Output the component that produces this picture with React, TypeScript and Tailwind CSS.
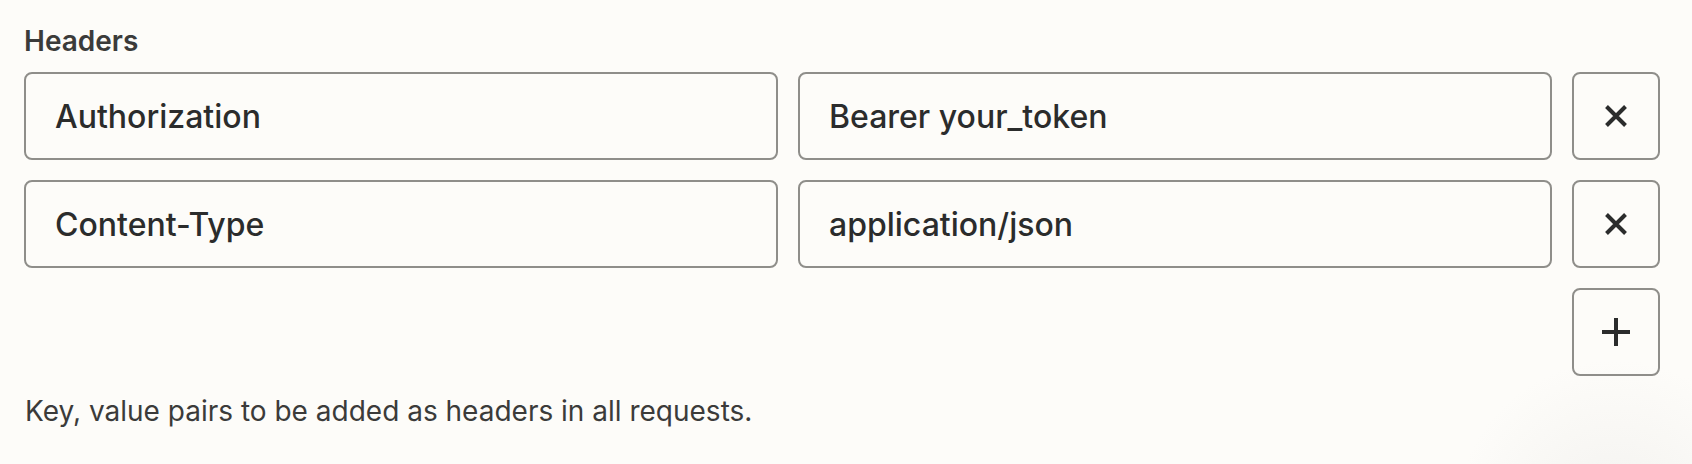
import { useState } from "react";

type Header = { key: string; value: string };

const XIcon = () => (
  <svg width="22" height="22" viewBox="0 0 22 22" fill="none" stroke="currentColor" strokeWidth="4">
    <path d="M1.5 1.5L20.5 20.5M20.5 1.5L1.5 20.5" />
  </svg>
);

const PlusIcon = () => (
  <svg width="28" height="28" viewBox="0 0 28 28" fill="none" stroke="currentColor" strokeWidth="4">
    <path d="M14 0V28M0 14H28" />
  </svg>
);

const HeaderRow = ({ header, onRemove }: { header: Header; onRemove: () => void }) => (
  <div className="flex gap-5">
    <input
      defaultValue={header.key}
      className="flex-1 min-w-0 h-[88px] px-[29px] rounded-lg border-2 border-[#8f8e8a] bg-transparent text-[32px] font-medium text-[#2b2c2c] outline-none"
    />
    <input
      defaultValue={header.value}
      className="flex-1 min-w-0 h-[88px] px-[29px] rounded-lg border-2 border-[#8f8e8a] bg-transparent text-[32px] font-medium text-[#2b2c2c] outline-none"
    />
    <button
      onClick={onRemove}
      className="flex justify-center items-center w-[88px] h-[88px] shrink-0 rounded-lg border-2 border-[#8f8e8a] text-[#2b2c2c]"
      title="Remove header"
    >
      <XIcon />
    </button>
  </div>
);

export default function App() {
  const [headers, setHeaders] = useState<Header[]>([
    { key: "Authorization", value: "Bearer your_token" },
    { key: "Content-Type", value: "application/json" },
  ]);

  function removeHeader(index: number) {
    setHeaders(headers.filter((_, i) => i !== index));
  }

  function addHeader() {
    setHeaders([...headers, { key: "", value: "" }]);
  }

  return (
    <div className="w-full h-[464px] bg-[#fdfcf9] bg-[radial-gradient(circle_at_1615px_520px,#f3f2ef_0px,#fdfcf9_160px)] font-['Inter','Liberation_Sans',sans-serif] pl-6 pr-8 pt-[21px] overflow-hidden">
      <label className="block text-[28px] leading-[40px] font-semibold text-[#3b3b3a] mb-[11px]">Headers</label>

      <div className="flex flex-col gap-5">
        {headers.map((header, i) => (
          <HeaderRow key={i} header={header} onRemove={() => removeHeader(i)} />
        ))}
        <div className="flex justify-end">
          <button
            onClick={addHeader}
            className="flex justify-center items-center w-[88px] h-[88px] rounded-lg border-2 border-[#8f8e8a] text-[#2b2c2c]"
            title="Add header"
          >
            <PlusIcon />
          </button>
        </div>
      </div>

      <p className="mt-[15px] text-[28px] leading-[40px] text-[#3b3b3a] pl-px">
        Key, value pairs to be added as headers in all requests.
      </p>
    </div>
  );
}
